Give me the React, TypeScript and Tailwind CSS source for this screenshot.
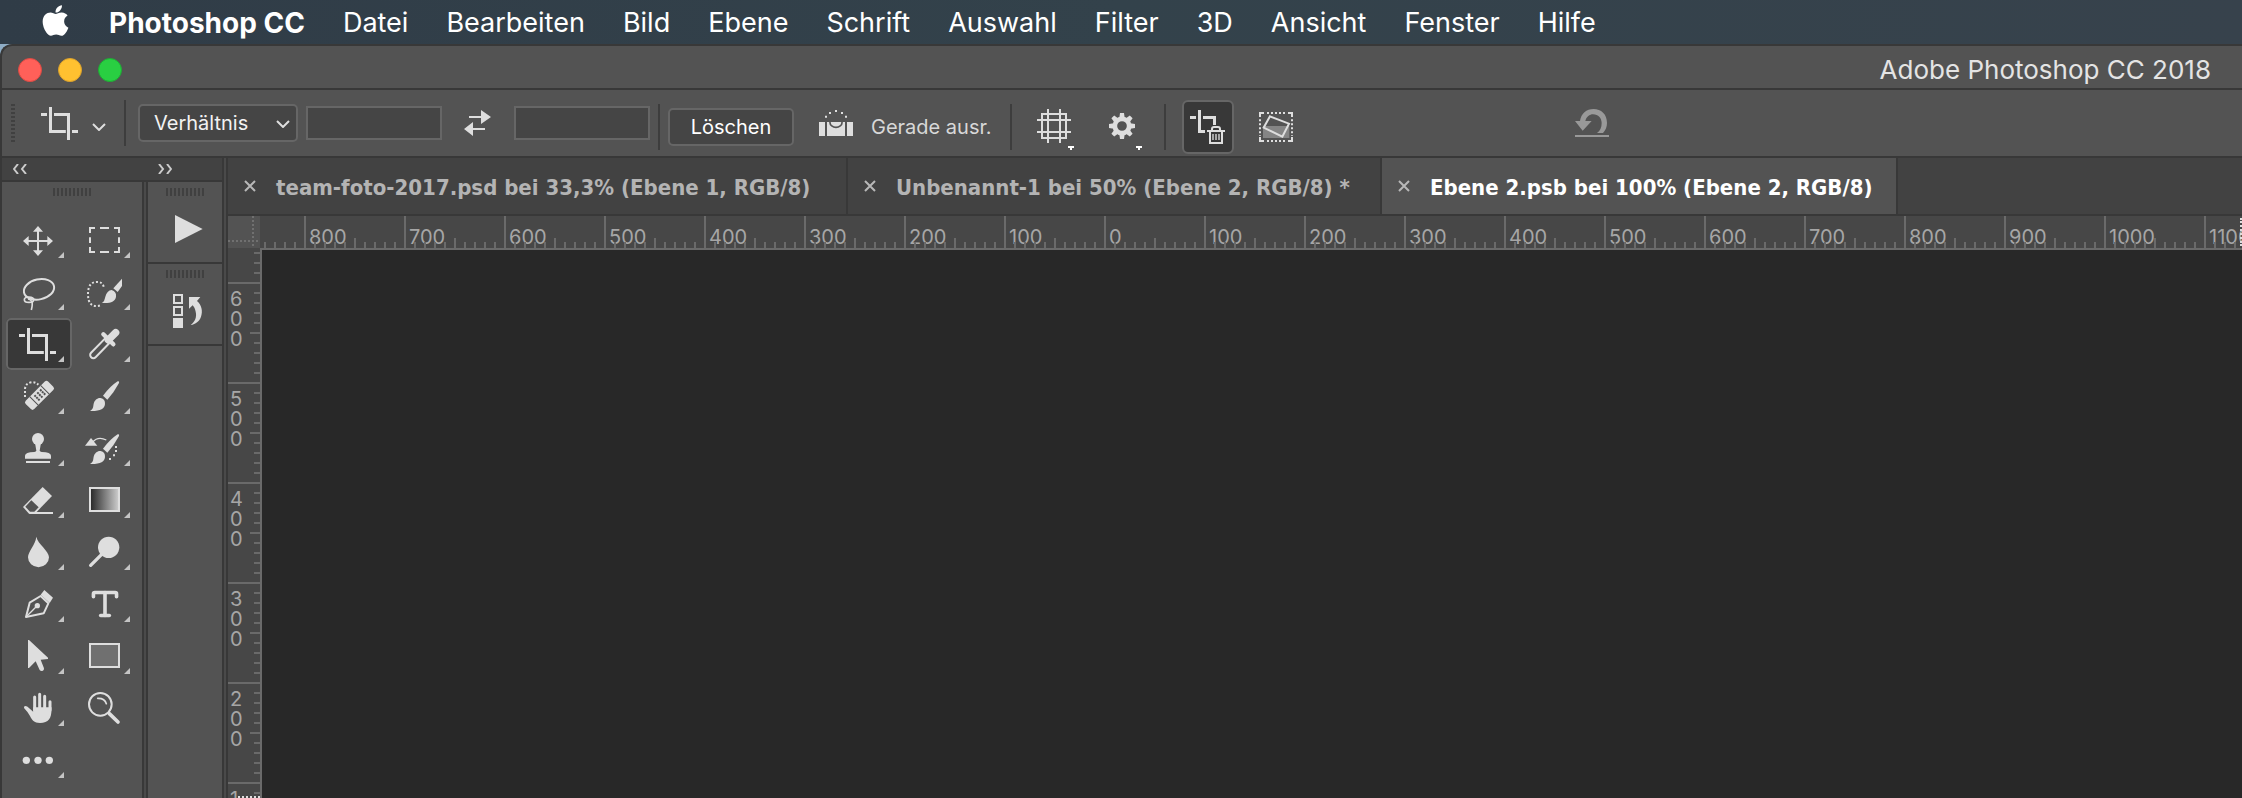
import React from 'react';
import { FaApple } from 'react-icons/fa';
import { Type } from 'lucide-react';

const INK = '#dedede';
const PANEL = '#535353';

const menus = ['Datei', 'Bearbeiten', 'Bild', 'Ebene', 'Schrift', 'Auswahl', 'Filter', '3D', 'Ansicht', 'Fenster', 'Hilfe'];

const documents = [
  { title: 'team-foto-2017.psd bei 33,3% (Ebene 1, RGB/8)', active: false, width: 'min-w-[620px]' },
  { title: 'Unbenannt-1 bei 50% (Ebene 2, RGB/8) *', active: false, width: 'min-w-[534px]' },
  { title: 'Ebene 2.psb bei 100% (Ebene 2, RGB/8)', active: true, width: 'min-w-[516px]' },
];

const horizontalMarks = [800, 700, 600, 500, 400, 300, 200, 100, 0, 100, 200, 300, 400, 500, 600, 700, 800, 900, 1000, 1100];
const verticalMarks = [600, 500, 400, 300, 200, 100];
const minorTicks = [10, 20, 30, 40, 50, 60, 70, 80, 90];

/* ---------- Icons ---------- */

const CropGlyph = () => (
  <path d="M0 22.5h18M28.500 0v73.5h46M39 22.500h43.500V99M93 73.500h18" fill="none" stroke={INK} strokeWidth="9" />
);

const BrushGlyph = () => (
  <>
    <path d="M137 34q6-2 4 5q-14 27-35 50l-13-12q21-28 44-43z" fill={INK} />
    <path d="M86 84q14 3 13 18c-1 14-14 22-45 21c10-6 9-11 11-22c3-11 11-18 21-17z" fill={INK} />
  </>
);

const Chevron: React.FC<{ className?: string }> = ({ className }) => (
  <svg className={className} width="14" height="8" viewBox="0 0 14 8" fill="none" stroke={INK} strokeWidth="2" aria-hidden="true">
    <path d="M1 1l6 6 6-6" />
  </svg>
);

interface Tool {
  label: string;
  icon: React.ReactNode;
  active?: boolean;
  single?: boolean;
}

// Every tool glyph is drawn on a 198 x 156 grid
const tools: Tool[] = [
  {
    label: 'Verschieben',
    icon: (
      <>
        <path d="M96 48V114M63 81h66" stroke={INK} strokeWidth="6" />
        <path d="M96 36l15 17h-30zM96 126l15-17h-30zM51 81l17-15v30zM141 81l-17-15v30z" fill={INK} />
      </>
    ),
  },
  {
    label: 'Auswahlrechteck',
    icon: (
      <path
        d="M54 57V42H69M84 42H111M126 42H141V57M141 70V87M141 99V114H126M111 114H84M69 114H54V99M54 87V70"
        fill="none"
        stroke={INK}
        strokeWidth="6"
      />
    ),
  },
  {
    label: 'Lasso',
    icon: (
      <g fill="none" stroke={INK} strokeWidth="6">
        <ellipse cx="99" cy="70" rx="46" ry="30" transform="rotate(-12 99 70)" />
        <ellipse cx="69" cy="101" rx="14" ry="8" strokeWidth="5" />
        <path d="M66 99c12 2 16 10 10 33" strokeWidth="5" />
      </g>
    ),
  },
  {
    label: 'Schnellauswahl',
    icon: (
      <>
        <path d="M95 62C92 50 84 48 74 48S48 52 48 84s14 36 26 36q8 0 14-3" fill="none" stroke={INK} strokeWidth="6" strokeDasharray="6 6" />
        <path d="M150 38V60L137 78l-13-11z" fill={INK} />
        <path d="M119 72q15 5 13 20c-2 14-15 21-43 19c8-4 8-9 11-19c3-12 10-19 19-20z" fill={INK} />
      </>
    ),
  },
  { label: 'Freistellen', active: true, icon: <g transform="translate(39 30)"><CropGlyph /></g> },
  {
    label: 'Pipette',
    icon: (
      <g strokeLinecap="round">
        <path d="M107 67L64 111" stroke={INK} strokeWidth="25" />
        <path d="M107 67L64 111" stroke={PANEL} strokeWidth="13" />
        <path d="M94 49L124 79" stroke={INK} strokeWidth="13" />
        <path d="M131 44L109 66" stroke={INK} strokeWidth="22" />
      </g>
    ),
  },
  {
    label: 'Bereichsreparatur',
    icon: (
      <>
        <g transform="rotate(-45 100.500 76)">
          <rect x="53" y="58" width="95" height="36" rx="7" fill={INK} />
          <path d="M77 58v36M124 58v36" stroke={PANEL} strokeWidth="3" />
          <path d="M87 68h30M87 76h30M87 84h30" stroke={PANEL} strokeWidth="6" strokeDasharray="6 6" />
        </g>
        <path d="M57 81V57Q58 40 76 37Q87 35 97 44" fill="none" stroke={INK} strokeWidth="6" strokeDasharray="6 6" />
      </>
    ),
  },
  { label: 'Pinsel', icon: <BrushGlyph /> },
  {
    label: 'Kopierstempel',
    icon: (
      <g fill={INK}>
        <circle cx="96" cy="51" r="18" />
        <path d="M87 62l4 24q-1 3-6 4q-28 1-28 11v9h78v-9q0-10-28-11q-5-1-6-4l4-24z" />
        <rect x="60" y="117" width="72" height="6" />
      </g>
    ),
  },
  {
    label: 'Protokollpinsel',
    icon: (
      <>
        <g transform="translate(0 3)"><BrushGlyph /></g>
        <path d="M39 71L57 48L76 71z" fill={INK} />
        <path d="M62 60Q78 42 103 54" fill="none" stroke={INK} strokeWidth="4" />
        <path d="M129 72h6v6h-6zM129 84h6v6h-6zM123 97h6v6h-6zM111 108h6v6h-6z" fill={INK} />
      </>
    ),
  },
  {
    label: 'Radiergummi',
    icon: (
      <>
        <path d="M110 39L138 66L87 119H69L51 99z" fill={INK} strokeLinejoin="round" />
        <path d="M76 79L98 100L85 113H72L58 98z" fill={PANEL} />
        <rect x="70" y="114" width="71" height="6" fill={INK} />
      </>
    ),
  },
  {
    label: 'Verlauf',
    icon: (
      <>
        <defs>
          <linearGradient id="gradient-tool">
            <stop offset="0" stopColor="#262626" />
            <stop offset="1" stopColor="#cfcfcf" />
          </linearGradient>
        </defs>
        <rect x="54" y="42" width="87" height="69" fill="url(#gradient-tool)" stroke={INK} strokeWidth="6" />
      </>
    ),
  },
  { label: 'Weichzeichner', icon: <path d="M91 32c4 22 38 42 38 62a31 29 0 0 1-63 0c0-18 22-36 25-62z" fill={INK} /> },
  {
    label: 'Abwedler',
    icon: (
      <>
        <circle cx="110" cy="64" r="32" fill={INK} />
        <path d="M92 82L56 118" stroke={INK} strokeWidth="10" strokeLinecap="round" />
      </>
    ),
  },
  {
    label: 'Zeichenstift',
    icon: (
      <>
        <path d="M60 117L71 74L104 54L127 76L113 106z" fill="none" stroke={INK} strokeWidth="6" strokeLinejoin="round" />
        <path d="M115 36L141 59L131 75L104 50z" fill={INK} />
        <circle cx="94" cy="83" r="8" fill={INK} />
        <path d="M60 117L92 85" stroke={INK} strokeWidth="4" />
      </>
    ),
  },
  { label: 'Text', icon: <Type x={47} y={26} width={104} height={104} color={INK} strokeWidth={2.5} /> },
  {
    label: 'Pfadauswahl',
    icon: <path d="M66 30h3L126 83V87L104 89L114 115q1 6-5 8q-5 1-8-3L89 94L69 114H66z" fill={INK} />,
  },
  { label: 'Rechteck', icon: <rect x="54" y="42" width="87" height="69" fill="#707070" stroke={INK} strokeWidth="6" /> },
  {
    label: 'Hand',
    icon: (
      <>
        <path d="M86 45V85M101 37V85M116 43V85M132 59V85" stroke={INK} strokeWidth="9" strokeLinecap="round" />
        <path d="M58 72q6 0 10 5L81.500 89V76H136.500V84C136 108 128 123 102 123C84 123 78 114 72 102Q64 88 54 78Q53 72 58 72z" fill={INK} />
      </>
    ),
  },
  {
    label: 'Zoom',
    single: true,
    icon: (
      <g fill="none" stroke={INK} strokeLinecap="round">
        <circle cx="85" cy="67" r="34" strokeWidth="6" />
        <path d="M77 49Q98 48 103 65" strokeWidth="5" />
        <path d="M112 95L138 120" strokeWidth="11" />
      </g>
    ),
  },
  {
    label: 'Symbolleiste bearbeiten',
    icon: (
      <g fill={INK}>
        <circle cx="61" cy="79" r="11" />
        <circle cx="96" cy="79" r="11" />
        <circle cx="130" cy="79" r="11" />
      </g>
    ),
  },
];

/* ---------- Small building blocks ---------- */

const Separator: React.FC<{ className?: string }> = ({ className }) => (
  <div className={`h-[46px] w-[2px] shrink-0 bg-[#3d3d3d] ${className ?? ''}`} />
);

const Splitter = () => <div className="w-[6px] shrink-0 border-x-2 border-[#383838] bg-[#4a4a4a]" />;

const Grip = () => (
  <svg width="38" height="8" className="mx-auto block" aria-hidden="true">
    <path d="M0 4H38" stroke="#404040" strokeWidth="8" strokeDasharray="2 2" />
  </svg>
);

const NumberField: React.FC<{ label: string; className: string }> = ({ label, className }) => (
  <input
    type="text"
    aria-label={label}
    className={`h-[34px] w-[136px] shrink-0 border-2 border-[#666666] bg-[#454545] px-2 text-white outline-none ${className}`}
  />
);

/* ---------- Bars ---------- */

const MenuBar = () => (
  <nav className="flex h-[44px] shrink-0 items-center gap-[38px] bg-linear-to-r from-[#303c47] via-[#33424b] to-[#37424c] pt-[2px] pl-[38px] text-[27px] text-white">
    <button type="button" aria-label="Apple" className="-mr-[2px] pb-[6px]">
      <FaApple size={35} />
    </button>
    <button type="button" className="text-[28px] font-bold">Photoshop CC</button>
    {menus.map((menu) => (
      <button type="button" key={menu}>{menu}</button>
    ))}
  </nav>
);

const TitleBar = () => (
  <header className="flex h-[42px] shrink-0 items-center justify-between pt-[6px] pr-[31px] pl-4">
    <div className="flex gap-4">
      <button type="button" aria-label="Schließen" className="size-6 rounded-full border border-[#dc4a43] bg-[#ff6059]" />
      <button type="button" aria-label="Minimieren" className="size-6 rounded-full border border-[#dba12c] bg-[#ffc130]" />
      <button type="button" aria-label="Zoomen" className="size-6 rounded-full border border-[#1eac35] bg-[#29cf42]" />
    </div>
    <h1 className="text-[26px] leading-8 text-[#e4e4e4]">Adobe Photoshop CC 2018</h1>
  </header>
);

const OptionsBar = () => (
  <div className="flex h-[68px] shrink-0 items-center border-t-2 border-[#383838] pl-[9px] text-[20px]">
    <svg width="4" height="38" className="shrink-0" aria-hidden="true">
      <path d="M2 0V38" stroke="#404040" strokeWidth="4" strokeDasharray="2 2" />
    </svg>
    <button type="button" aria-label="Freistellungswerkzeug" className="ml-[26px] flex shrink-0 items-center gap-[14px]">
      <svg width="37" height="33" viewBox="0 0 111 99"><CropGlyph /></svg>
      <Chevron className="mt-[7px]" />
    </button>
    <Separator className="ml-[18px]" />
    <div className="relative ml-3 shrink-0">
      <select
        aria-label="Seitenverhältnis"
        className="block h-[38px] w-[160px] appearance-none rounded-[5px] border-2 border-[#666666] bg-[#454545] pl-[14px] text-[#f2f2f2]"
      >
        <option>Verhältnis</option>
      </select>
      <Chevron className="pointer-events-none absolute top-4 right-2" />
    </div>
    <NumberField label="Breite" className="ml-2" />
    <button type="button" aria-label="Breite und Höhe tauschen" className="ml-5 shrink-0">
      <svg width="30" height="28" viewBox="0 0 30 28">
        <path d="M7 8H21M10 20H23" stroke={INK} strokeWidth="2" />
        <path d="M19 1L29 8L19 15zM11 13L2 20L11 27z" fill={INK} />
      </svg>
    </button>
    <NumberField label="Höhe" className="ml-[22px]" />

    <div className="ml-2 flex shrink-0 items-center pt-2">
      <Separator />
      <button type="button" className="ml-2 h-[38px] w-[126px] rounded-[5px] border-2 border-[#666666] bg-[#454545] text-white">
        Löschen
      </button>
      <button type="button" className="ml-[25px] flex items-center gap-[18px] text-[#d8d8d8]">
        <svg width="34" height="26" viewBox="0 0 102 78" className="mb-2">
          <path d="M0 36H18V78H0zM24 36H78V78H24zM84 36H102V78H84z" fill={INK} />
          <path d="M33 36v2a18 14 0 0 0 36 0v-2" fill="none" stroke={PANEL} strokeWidth="5" />
          <path d="M18 17h6v6h-6zM30 6h6v6h-6zM48 0h6v6h-6zM66 6h6v6h-6zM78 17h6v6h-6z" fill={INK} />
        </svg>
        Gerade ausr.
      </button>
      <Separator className="ml-[18px]" />
      <button type="button" aria-label="Überlagerungsoptionen" className="mt-1 ml-[25px]">
        <svg width="37" height="41" viewBox="0 0 111 123">
          <path d="M15 15H87V87H15zM33 0V102M69 0V102M0 33H102M0 69H102" fill="none" stroke={INK} strokeWidth="6" />
          <path d="M93 111h18v6h-6v6h-6v-6h-6z" fill="#ffffff" />
        </svg>
      </button>
      <button type="button" aria-label="Freistellungsoptionen" className="mt-1 ml-[35px]">
        <svg width="33" height="41" viewBox="0 0 99 123">
          <circle cx="39" cy="51" r="21.500" fill="none" stroke={INK} strokeWidth="14" />
          {[0, 45, 90, 135].map((angle) => (
            <path key={angle} d="M33 12h12l2 14h-16zM31 76h16l-2 14h-12z" fill={INK} transform={`rotate(${angle} 39 51)`} />
          ))}
          <path d="M81 111h18v6h-6v6h-6v-6h-6z" fill="#ffffff" />
        </svg>
      </button>
      <Separator className="ml-[22px]" />
      <button
        type="button"
        aria-pressed="true"
        aria-label="Außerhalb liegende Pixel löschen"
        className="ml-4 flex h-[54px] w-[52px] items-center justify-center rounded-[6px] border-2 border-[#666666] bg-[#383838]"
      >
        <svg width="36" height="36" viewBox="0 0 108 108">
          <path d="M0 25.500H18M28.500 3V67.500H45M39 25.500H73.500V48" fill="none" stroke={INK} strokeWidth="9" />
          <path d="M51 66H105M66 66V60Q66 54 72 54H84Q90 54 90 60V66M60 66V102H96V66" fill="none" stroke={INK} strokeWidth="6" />
          <path d="M69 75V93M78 75V93M87 75V93" stroke={INK} strokeWidth="4" />
        </svg>
      </button>
      <button type="button" aria-label="Inhaltsbasiert" className="ml-[25px]">
        <svg width="34" height="30" viewBox="0 0 102 90">
          <path d="M12 42H91V78H12z" fill="#858585" />
          <path d="M33 13L90 35L70 74L14 47z" fill="none" stroke={INK} strokeWidth="6" />
          <path d="M24 3H84M24 87H84M3 22V72M99 22V72" stroke={INK} strokeWidth="6" strokeDasharray="6 6" />
          <path d="M3 15V3H15M87 3H99V15M99 75V87H87M15 87H3V75" fill="none" stroke={INK} strokeWidth="6" />
        </svg>
      </button>
    </div>

    <button type="button" aria-label="Zurücksetzen" disabled className="ml-[282px] shrink-0">
      <svg width="34" height="28" viewBox="0 0 102 84" fill="#999999">
        <path d="M96 42C96 15 78 0 56 0C34 0 18 14 15 36H0L23 65L50 36H31C34 23 44 16 54 16C70 16 80 28 80 42C80 56 75 66 66 72H84C92 64 96 54 96 42z" />
        <path d="M0 78H102V84H0z" />
      </svg>
    </button>
  </div>
);

/* ---------- Left panels ---------- */

const Sidebar = () => (
  <aside className="flex shrink-0 flex-col">
    <div className="flex h-[24px] shrink-0 items-center border-b-2 border-[#383838] bg-[#424242] pl-[11px]">
      <button type="button" aria-label="Werkzeuge reduzieren" className="w-[145px]">
        <svg width="14" height="10" viewBox="0 0 14 10" fill="none" stroke="#cccccc" strokeWidth="2">
          <path d="M5 0L1 5l4 5M13 0L9 5l4 5" />
        </svg>
      </button>
      <button type="button" aria-label="Bedienfelder erweitern">
        <svg width="14" height="10" viewBox="0 0 14 10" fill="none" stroke="#cccccc" strokeWidth="2">
          <path d="M1 0l4 5-4 5M9 0l4 5-4 5" />
        </svg>
      </button>
    </div>
    <div className="flex min-h-0 flex-1">
      <div className="w-[140px] pt-[6px]">
        <Grip />
        <div className="mt-[18px] grid grid-cols-2 px-1">
          {tools.map((tool) => (
            <button
              type="button"
              key={tool.label}
              aria-label={tool.label}
              aria-pressed={!!tool.active}
              className={tool.active ? 'rounded-[5px] bg-[#383838] outline-2 -outline-offset-2 outline-[#666666]' : ''}
            >
              <svg viewBox="0 0 198 156" className="block w-full">
                {tool.icon}
                {!tool.single && <path d="M174 114V132H156z" fill="#c4c4c4" />}
              </svg>
            </button>
          ))}
        </div>
      </div>
      <Splitter />
      <div className="w-[74px]">
        <div className="border-b-2 border-[#383838] pt-[6px]">
          <Grip />
          <button type="button" aria-label="Aktionen" className="block w-full">
            <svg viewBox="0 0 222 198" className="block w-full">
              <path d="M81 57L164 99L81 141z" fill={INK} />
            </svg>
          </button>
        </div>
        <div className="border-b-2 border-[#383838] pt-[6px]">
          <Grip />
          <button type="button" aria-label="Protokoll" className="block w-full">
            <svg viewBox="0 0 222 198" className="block w-full">
              <path d="M78 51H102V75H78zM78 87H102V111H78z" fill="none" stroke={INK} strokeWidth="6" />
              <path d="M75 120H105V150H75z" fill={INK} />
              <path d="M123 57H157L147 69C161 80 165 100 159 116C154 130 143 138 128 141C141 131 147 117 143 101C141 91 138 87 134 82L123 92z" fill={INK} />
            </svg>
          </button>
        </div>
      </div>
    </div>
  </aside>
);

/* ---------- Document area ---------- */

const HorizontalCell: React.FC<{ mark?: number }> = ({ mark }) => (
  <div className="relative h-[32px] w-[100px] shrink-0 border-l-2 border-[#6a6a6a] pt-[11px] pl-[3px] leading-5">
    {mark}
    <svg width="100" height="32" className="absolute top-0 -left-[2px]" stroke="#6a6a6a" strokeWidth="2" aria-hidden="true">
      {minorTicks.map((t) => (
        <path key={t} d={`M${t + 1} ${t === 50 ? 22 : 26}V32`} />
      ))}
    </svg>
  </div>
);

const VerticalCell: React.FC<{ mark?: number }> = ({ mark }) => (
  <div className="relative h-[100px] w-full shrink-0 border-t-2 border-[#6a6a6a] pt-[5px] pl-[2px] leading-5">
    {String(mark ?? '').split('').map((digit, i) => (
      <div key={i}>{digit}</div>
    ))}
    <svg width="32" height="100" className="absolute -top-[2px] right-0" stroke="#6a6a6a" strokeWidth="2" aria-hidden="true">
      {minorTicks.map((t) => (
        <path key={t} d={`M${t === 50 ? 22 : 26} ${t + 1}H32`} />
      ))}
    </svg>
  </div>
);

const DocumentTabs = () => (
  <div className="flex h-[58px] shrink-0 border-b-2 border-[#383838] bg-[#424242]">
    {documents.map((doc) => (
      <div
        key={doc.title}
        className={`flex shrink-0 items-center border-r-2 border-[#383838] pr-4 pl-4 ${doc.width} ${doc.active ? 'bg-[#535353] text-white' : 'text-[#b4b4b4]'}`}
      >
        <button type="button" aria-label="Tab schließen" className="mr-5">
          <svg width="12" height="12" viewBox="0 0 12 12" stroke="#b8b8b8" strokeWidth="2">
            <path d="M1 1L11 11M11 1L1 11" />
          </svg>
        </button>
        <button type="button" className="pt-1 font-['DejaVu_Sans_Condensed','Noto_Sans',sans-serif] text-[22px] leading-8 font-bold whitespace-nowrap">
          {doc.title}
        </button>
      </div>
    ))}
  </div>
);

const Workspace = () => (
  <main className="flex min-w-0 flex-1 flex-col">
    <DocumentTabs />
    <div className="flex h-[32px] shrink-0 bg-[#474747] text-[20px] text-[#a6a6a6]">
      <svg width="34" height="32" className="shrink-0" aria-hidden="true">
        <path d="M0 0H32V32H0z" fill={PANEL} />
        <path d="M25 0V32M0 25H32" stroke="#707070" strokeWidth="2" strokeDasharray="2 2" />
      </svg>
      <div className="relative flex min-w-0 flex-1 overflow-hidden">
        <div className="flex w-[42px] shrink-0 justify-end overflow-hidden">
          <HorizontalCell />
        </div>
        {horizontalMarks.map((mark, i) => (
          <HorizontalCell key={i} mark={mark} />
        ))}
        <div className="absolute inset-y-[2px] right-0 border-r-2 border-dotted border-[#dedede]" />
      </div>
    </div>
    <div className="flex min-h-0 flex-1">
      <div className="relative flex w-[34px] shrink-0 flex-col overflow-hidden border-r-2 border-[#6a6a6a] bg-[#474747] text-[20px] text-[#a6a6a6]">
        <div className="flex h-[34px] shrink-0 flex-col justify-end overflow-hidden">
          <VerticalCell />
        </div>
        {verticalMarks.map((mark, i) => (
          <VerticalCell key={i} mark={mark} />
        ))}
        <div className="absolute right-0 bottom-0 w-[22px] border-b-2 border-dotted border-[#dedede]" />
      </div>
      <div className="flex-1 border-t-2 border-[#6a6a6a] bg-[#282828]" />
    </div>
  </main>
);

export default function App() {
  return (
    <div className="flex h-screen flex-col overflow-hidden bg-[#8fadc6] font-['Inter','Liberation_Sans',sans-serif]">
      <MenuBar />
      <div className="flex min-h-0 flex-1 flex-col rounded-tl-[12px] border-t-2 border-l-2 border-[#383838] bg-[#535353]">
        <TitleBar />
        <OptionsBar />
        <div className="flex min-h-0 flex-1 border-t-2 border-[#383838]">
          <Sidebar />
          <Splitter />
          <Workspace />
        </div>
      </div>
    </div>
  );
}
